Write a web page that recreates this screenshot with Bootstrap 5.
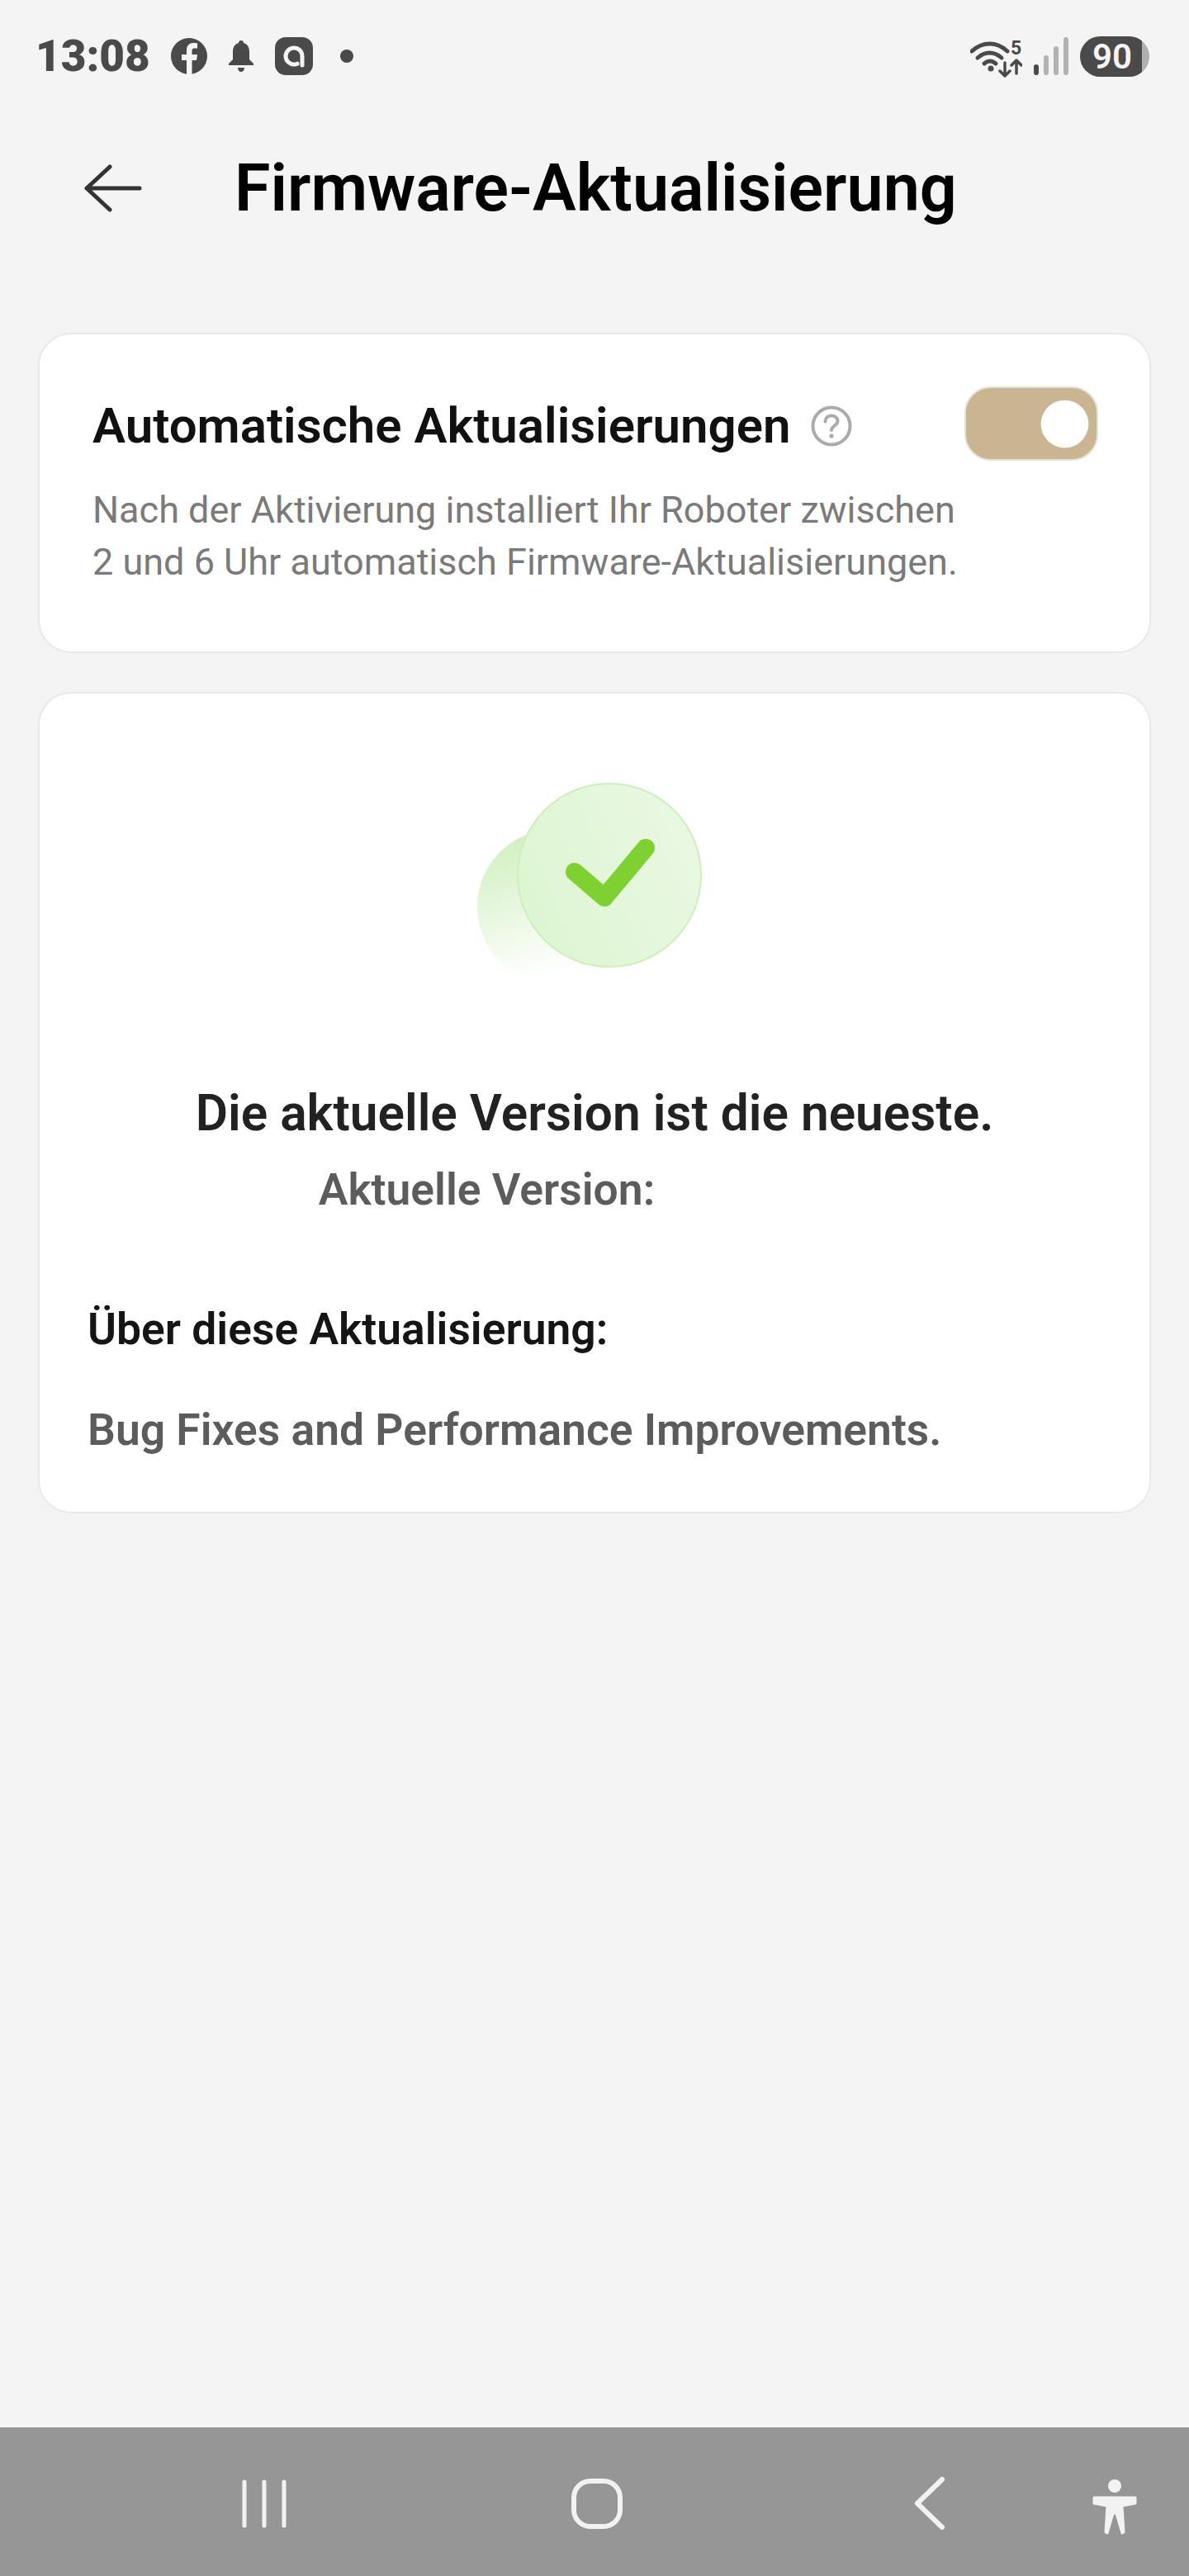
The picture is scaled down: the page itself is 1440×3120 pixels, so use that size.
<!DOCTYPE html>
<html lang="de">
<head>
  <meta charset="utf-8">
  <meta name="viewport" content="width=device-width, initial-scale=1">
  <title>Firmware-Aktualisierung</title>
  <link href="https://cdn.jsdelivr.net/npm/bootstrap@5.3.6/dist/css/bootstrap.min.css" rel="stylesheet">
  <style>
    body { background: #f4f4f4; font-family: Roboto, sans-serif; }
    .screen { min-height: 3120px; }
    .status-bar { height: 136px; padding: 0 48px 0 43px; color: #4a4a4a; }
    .status-time { font-size: 53px; font-weight: 900; line-height: 1; }
    .status-left { gap: 25px; }
    .status-right { gap: 14px; }
    .status-five { font-family: Roboto, sans-serif; font-size: 23px; font-weight: 700; fill: #4a4a4a; }
    .battery { width: 84px; height: 49px; border-radius: 25px; background: linear-gradient(90deg, #4a4a4a 89%, #b0b0b0 89%); color: #f4f4f4; font-size: 42px; font-weight: 600; line-height: 49px; text-align: center; padding-right: 6px; }
    .page-head { height: 184px; padding-left: 102px; }
    .page-title { font-size: 79px; font-weight: 600; color: #000; margin: 0 0 0 112px; line-height: 1; }
    .panel-list { padding: 83px 46px 0; gap: 47px; }
    .panel { border: 2px solid #e9e9e9; border-radius: 40px; background: #fff; }
    .panel-auto { height: 388px; padding: 63px 62px 0 64px; }
    .auto-copy { padding-top: 3px; }
    .auto-title { font-size: 60px; font-weight: 600; color: #111; line-height: 90px; margin: 0; }
    .auto-help { margin-left: 24px; }
    .auto-text { font-size: 45px; line-height: 63px; color: #7a7a7a; margin: 25px 0 0; white-space: nowrap; }
    .auto-switch.form-check-input { width: 162px; height: 90px; margin: 0; border: 2px solid #e6e1d6; background-color: #c9b592; background-size: 77px 77px; background-position: right 4px center; box-shadow: none; }
    .panel-version { height: 995px; padding: 108px 58px 0; }
    .check-art { width: 272px; height: 244px; margin-left: -13px; }
    .version-title { font-size: 60.400px; font-weight: 600; color: #222; margin: 123px 0 0; line-height: 68px; }
    .version-label { font-size: 53.400px; font-weight: 600; color: #5c5c5c; margin: 24px 0 0; line-height: 68px; padding-right: 261px; }
    .about-title { font-size: 53.400px; font-weight: 600; color: #151515; margin: 100px 0 0; line-height: 70px; }
    .about-text { font-size: 53.400px; font-weight: 600; color: #5c5c5c; margin: 52px 0 0; line-height: 70px; }
    .nav-keys { height: 180px; background: #969696; }
    .nav-keys svg { display: block; }
  </style>
</head>
<body>
  <div class="screen d-flex flex-column">
    <div class="status-bar d-flex align-items-center justify-content-between">
      <div class="status-left d-flex align-items-center">
        <span class="status-time">13:08</span>
        <svg width="44" height="44" viewBox="0 0 44 44"><circle cx="22" cy="22" r="22" fill="#4a4a4a"/><path d="M19 44V27h-6v-7h6v-5c0-6 3.500-9 8.500-9 2 0 4 .300 4.500.400v6h-3c-3 0-3.500 1.500-3.500 3.400V20h6.500l-1 7H25.500v17z" fill="#f4f4f4"/></svg>
        <svg width="32" height="38" viewBox="0 0 32 38"><path d="M16 0c2 0 3 1.300 3 3 5 1.500 7 5.500 7 11v9l5 5v2H1v-2l5-5v-9c0-5.500 2-9.500 7-11 0-1.700 1-3 3-3zM12 33h8c0 3-2 5-4 5s-4-2-4-5z" fill="#4a4a4a"/></svg>
        <svg width="46" height="46" viewBox="0 0 46 46"><rect width="46" height="46" rx="13" fill="#4a4a4a"/><path d="M33 34V23c0-6-4.500-10-10-10s-10 4.500-10 10 4.500 10 10 10c1.500 0 3-.300 4-.800" fill="none" stroke="#f4f4f4" stroke-width="5" stroke-linecap="round"/></svg>
        <svg class="ms-2" width="16" height="16" viewBox="0 0 16 16"><circle cx="8" cy="8" r="8" fill="#4a4a4a"/></svg>
      </div>
      <div class="status-right d-flex align-items-center">
        <svg width="63" height="54" viewBox="0 -8 63 54" fill="none" stroke="#4a4a4a" stroke-linecap="round" stroke-linejoin="round">
          <path d="M2 13C15 1 32 1 45 13" stroke-width="5"/>
          <path d="M9 21c9-8 20-8 29 0" stroke-width="5"/>
          <path d="M17 28c5-4 9-4 14 0" stroke-width="5"/>
          <circle cx="25" cy="34" r="3.500" fill="#4a4a4a" stroke="none"/>
          <path d="M42 27v16M36 37l6 6 6-6M56 40V24M50 30l6-6 6 6" stroke-width="3.500"/>
          <text class="status-five" x="49" y="17" stroke="none">5</text>
        </svg>
        <svg width="42" height="46" viewBox="0 0 42 46"><rect x="0" y="33" width="6" height="13" rx="3" fill="#4a4a4a"/><rect x="12" y="22" width="6" height="24" rx="3" fill="#b2b2b2"/><rect x="24" y="11" width="6" height="35" rx="3" fill="#b2b2b2"/><rect x="36" y="0" width="6" height="46" rx="3" fill="#b2b2b2"/></svg>
        <div class="battery">90</div>
      </div>
    </div>

    <div class="page-head d-flex align-items-center">
      <svg width="70" height="58" viewBox="0 0 70 58" fill="none" stroke="#333" stroke-width="5" stroke-linecap="round" stroke-linejoin="round"><path d="M31 3L3 29l28 26M3 29h64"/></svg>
      <h1 class="page-title">Firmware-Aktualisierung</h1>
    </div>

    <div class="panel-list d-flex flex-column">
      <div class="card panel panel-auto">
        <div class="d-flex align-items-start justify-content-between">
          <div class="auto-copy">
            <div class="d-flex align-items-center">
              <h2 class="auto-title">Automatische Aktualisierungen</h2>
              <svg class="auto-help" width="50" height="50" viewBox="0 0 50 50"><circle cx="25" cy="25" r="22.500" fill="none" stroke="#ababab" stroke-width="4"/><path d="M17.500 19.500c0-4.500 3.500-7 7.500-7s7.500 2.500 7.500 6.500c0 5.500-7.500 5.500-7.500 11" fill="none" stroke="#ababab" stroke-width="4" stroke-linecap="round"/><circle cx="25" cy="37" r="2.600" fill="#ababab"/></svg>
            </div>
            <p class="auto-text">Nach der Aktivierung installiert Ihr Roboter zwischen<br>2 und 6 Uhr automatisch Firmware-Aktualisierungen.</p>
          </div>
          <div class="form-check form-switch p-0 m-0">
            <input class="form-check-input auto-switch" type="checkbox" role="switch" checked>
          </div>
        </div>
      </div>

      <div class="card panel panel-version">
        <div class="d-flex justify-content-center">
          <svg class="check-art" viewBox="-2 0 272 244">
            <defs>
              <linearGradient id="backFade" x1="0" y1="0" x2="0.300" y2="1"><stop offset="0" stop-color="#cdeeba"/><stop offset="1" stop-color="#ffffff"/></linearGradient>
              <linearGradient id="frontFill" x1="0" y1="0.700" x2="1" y2="0.300"><stop offset="0" stop-color="#ddf5d1"/><stop offset="1" stop-color="#eaf8e3"/></linearGradient>
            </defs>
            <circle cx="91" cy="150" r="93" fill="url(#backFade)"/>
            <circle cx="158" cy="112" r="111" fill="url(#frontFill)" stroke="#cdefbe" stroke-width="2"/>
            <path d="M116 108l36 31 50-60" fill="none" stroke="#7ed130" stroke-width="22" stroke-linecap="round" stroke-linejoin="round"/>
          </svg>
        </div>
        <h3 class="version-title text-center">Die aktuelle Version ist die neueste.</h3>
        <p class="version-label text-center">Aktuelle Version:</p>
        <h4 class="about-title">Über diese Aktualisierung:</h4>
        <p class="about-text">Bug Fixes and Performance Improvements.</p>
      </div>
    </div>

    <div class="nav-keys mt-auto d-flex align-items-center">
      <svg width="1440" height="180" viewBox="0 0 1440 180" fill="none" stroke="#f2f2f2" stroke-linecap="round" stroke-linejoin="round">
        <path d="M296 66v53M320 66v53M344 66v53" stroke-width="5"/>
        <rect x="695" y="65" width="56" height="55" rx="20" stroke-width="6"/>
        <path d="M1141 63l-30 29 30 29" stroke-width="6"/>
        <circle cx="1350" cy="71" r="8" fill="#f2f2f2" stroke="none"/>
        <path d="M1325 85h50v7l-16 3 2 32-2 1-7-24h-4l-7 24-2-1 2-32-16-3z" fill="#f2f2f2" stroke-width="3"/>
      </svg>
    </div>
  </div>
  <script src="https://cdn.jsdelivr.net/npm/bootstrap@5.3.6/dist/js/bootstrap.bundle.min.js"></script>
</body>
</html>
